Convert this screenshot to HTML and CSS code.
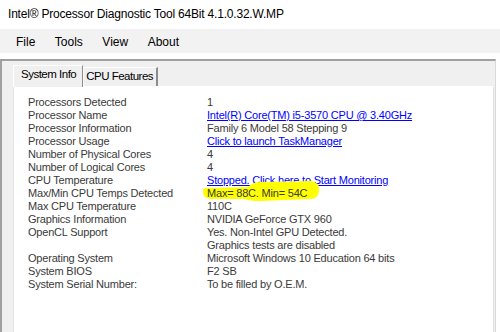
FILE: index.html
```html
<!DOCTYPE html>
<html lang="en">
<head>
    <meta charset="UTF-8">
    <title>Intel® Processor Diagnostic Tool 64Bit 4.1.0.32.W.MP</title>
    <link rel="stylesheet" href="styles.css">
</head>
<body>

<div class="titlebar">Intel® Processor Diagnostic Tool 64Bit 4.1.0.32.W.MP</div>

<div class="menubar">
    <span>File</span>
    <span>Tools</span>
    <span>View</span>
    <span>About</span>
</div>

<div class="window">
    <div class="tabs">
        <div class="tab active">System Info</div>
        <div class="tab">CPU Features</div>
    </div>

    <div class="panel">
        <div class="info">
            <div>Processors Detected</div>
            <div>1</div>

            <div>Processor Name</div>
            <div><a href="#">Intel(R) Core(TM) i5-3570 CPU @ 3.40GHz</a></div>

            <div>Processor Information</div>
            <div>Family 6 Model 58 Stepping 9</div>

            <div>Processor Usage</div>
            <div><a href="#">Click to launch TaskManager</a></div>

            <div>Number of Physical Cores</div>
            <div>4</div>

            <div>Number of Logical Cores</div>
            <div>4</div>

            <div>CPU Temperature</div>
            <div><a href="#">Stopped. Click here to Start Monitoring</a></div>

            <div>Max/Min CPU Temps Detected</div>
            <div class="marked">
                <svg class="marker" width="117" height="21" viewBox="0 0 117 21">
                    <path d="M0,9 Q1,6 12,7 L45,6 Q49,1 59,1 L109,0 Q117,2 116,10 Q115,18 107,18 L57,20 Q47,20 42,18 L9,18 Q0,18 0,11 Z" fill="#ffff00"/>
                </svg>
                Max= 88C. Min= 54C
            </div>

            <div>Max CPU Temperature</div>
            <div>110C</div>

            <div>Graphics Information</div>
            <div>NVIDIA GeForce GTX 960</div>

            <div>OpenCL Support</div>
            <div>Yes. Non-Intel GPU Detected.</div>

            <div></div>
            <div>Graphics tests are disabled</div>

            <div>Operating System</div>
            <div>Microsoft Windows 10 Education 64 bits</div>

            <div>System BIOS</div>
            <div>F2 SB</div>

            <div>System Serial Number:</div>
            <div>To be filled by O.E.M.</div>
        </div>
    </div>
</div>

</body>
</html>
```

FILE: styles.css
```css
body {
    margin: 0;
    background: #ffffff;
    font-family: "Liberation Sans", Arial, sans-serif;
    color: #000;
    overflow: hidden;
}

.titlebar {
    height: 22px;
    padding: 7px 0 0 8px;
    font-size: 12px;
    line-height: 15px;
    letter-spacing: -0.2px;
    color: #000;
}

.menubar {
    display: flex;
    gap: 19.5px;
    height: 22px;
    padding: 2px 0 0 16px;
    background: #f2f2f2;
    font-size: 12px;
    line-height: 22px;
}

.window {
    width: 493px;
    height: 271px;
    margin-top: 6px;
    background: #f0f0f0;
    border-top: 2px solid #a0a0a0;
    border-left: 2px solid #a0a0a0;
    border-right: 1px solid #d9d9d9;
    overflow: hidden;
}

.tabs {
    display: flex;
    align-items: flex-end;
    height: 25px;
    padding: 4px 0 0 11px;
    box-sizing: border-box;
}

.tab {
    height: 18px;
    padding: 0 3px 0 2px;
    border-top: 1px solid #ffffff;
    border-left: 1px solid #ffffff;
    border-right: 2px solid #8c8c8c;
    font-size: 11.5px;
    letter-spacing: -0.5px;
    line-height: 17px;
    color: #000;
}

.tab.active {
    height: 21px;
    padding: 0 6px 0 7px;
    line-height: 16px;
    border-right: 1px solid #8c8c8c;
    background: #f0f0f0;
    position: relative;
    z-index: 1;
    margin-bottom: -1px;
}

.panel {
    box-sizing: border-box;
    margin-left: 11px;
    width: 481px;
    height: 250px;
    background: #ffffff;
    border: 1px solid #e3e3e3;
    border-top-color: #ffffff;
    padding: 9px 0 0 14px;
}

.info {
    display: grid;
    grid-template-columns: 179px auto;
    font-size: 11px;
    line-height: 13px;
    letter-spacing: -0.2px;
    color: #3a3a3a;
}

.info a {
    color: #0000ff;
    text-decoration: underline;
}

.marked {
    position: relative;
    z-index: 0;
}

.marker {
    position: absolute;
    left: -4px;
    top: -6px;
    z-index: -1;
}
```
